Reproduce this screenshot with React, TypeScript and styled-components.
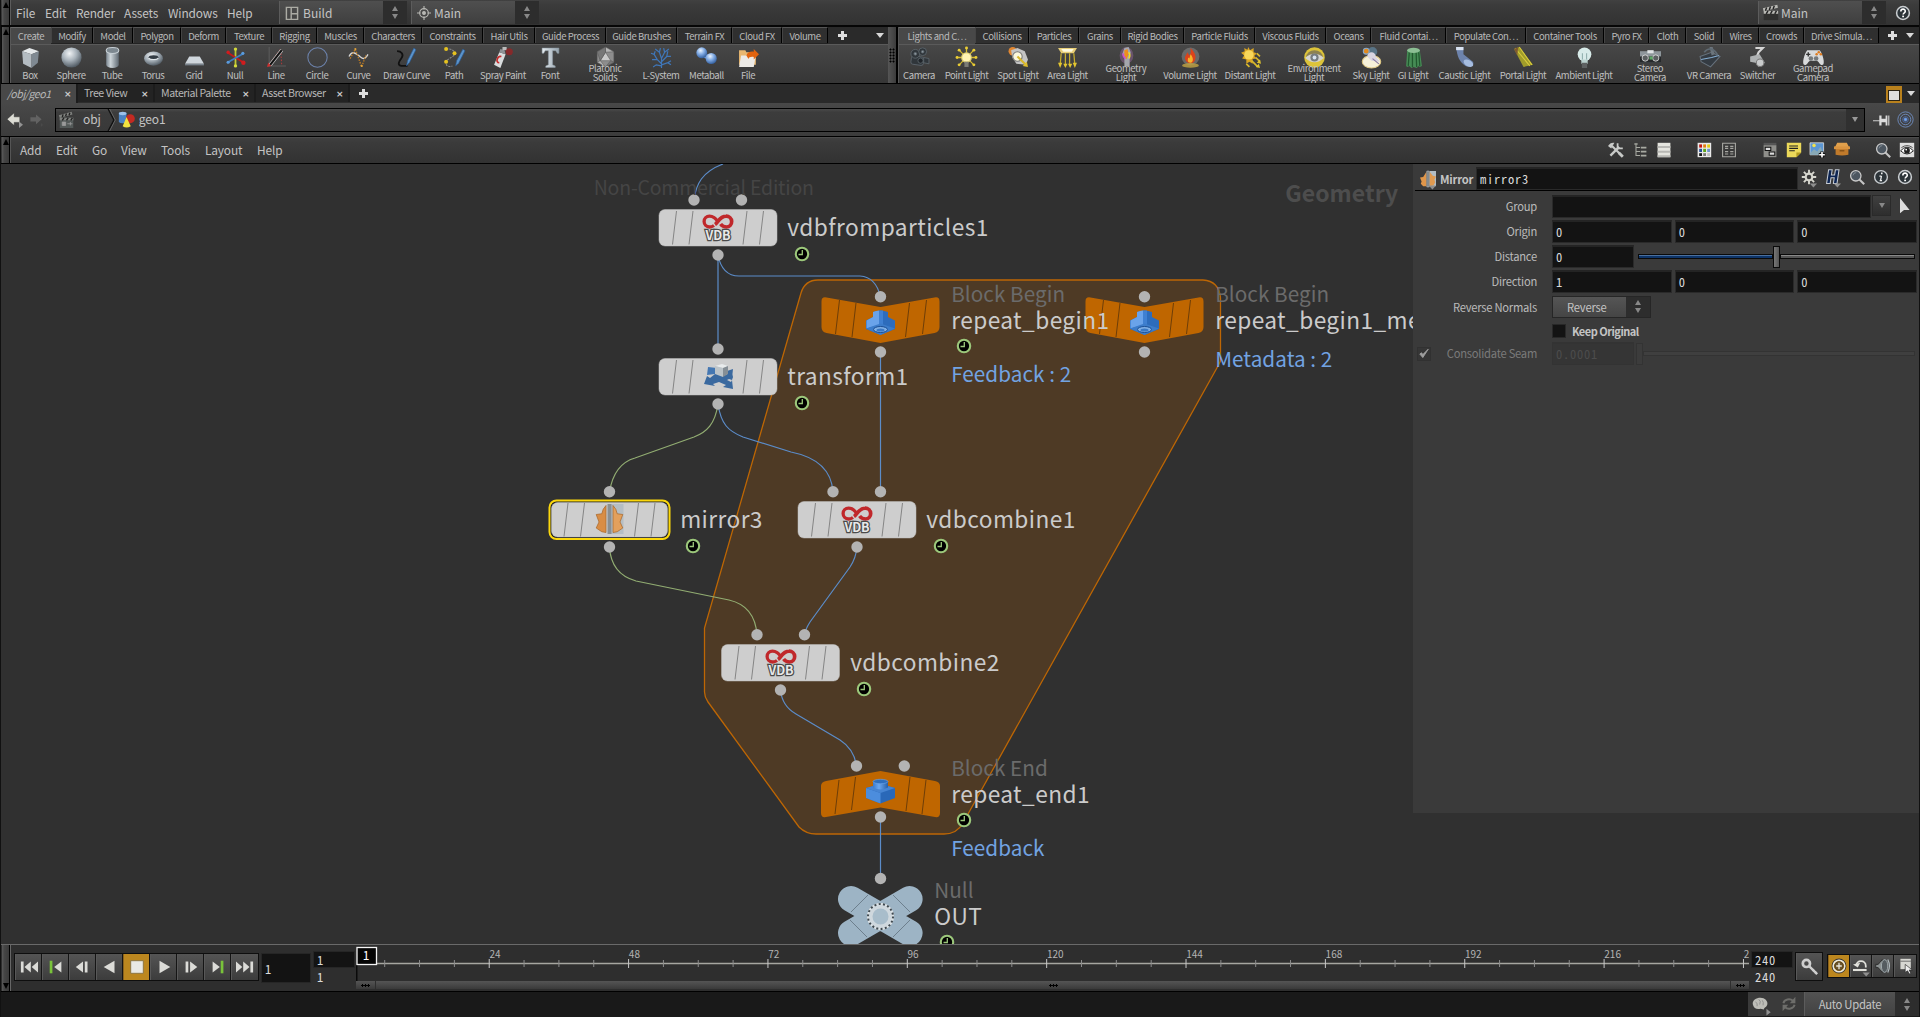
import React from "react";
import styled, { createGlobalStyle, css } from "styled-components";

const SANS = `"Noto Sans CJK SC", "Open Sans", sans-serif`;
const MONO = `"Noto Sans Mono CJK SC", "DejaVu Sans Mono", monospace`;

const Global = createGlobalStyle`
  * { box-sizing: border-box; }
  body { margin: 0; background: #191919; overflow: hidden; }
`;

const Frame = styled.div`
  width: 1920px;
  height: 1017px;
  display: flex;
  flex-direction: column;
  overflow: hidden;
  background: #303030;
  border-left: 1px solid #111;
  border-right: 1px solid #111;
  font-family: ${SANS};
  font-size: 12px;
  line-height: 16px;
  color: #c4c4c4;
  white-space: nowrap;
`;

const barFill = css`
  background: linear-gradient(#414141, #3b3b3b 20%, #323232);
`;

/* ---------- icons ---------- */

const steel = "url(#steel)";
const menuMark = <path d="M11 18h9l-4.500 5z" fill="#8f8f8f" />;
const icons: Record<string, React.ReactNode> = {
  box: (<g><path d="M2 4 9 1l9 3-7 3z" fill="#e4e8ea" /><path d="m2 4 9 3v13l-8-4z" fill="#b4bcc2" /><path d="m18 4-7 3v13l6-5z" fill="#7f8992" /></g>),
  sphere: <circle cx="10" cy="10" r="9.6" fill="url(#ball)" />,
  tube: (<g><path d="M4 3v14a6 3 0 0 0 12 0V3z" fill="url(#tube)" /><ellipse cx="10" cy="3.3" rx="6" ry="2.8" fill="#7d8890" stroke="#c8d0d6" /></g>),
  torus: (<g><ellipse cx="10" cy="11" rx="9" ry="6.800" fill="url(#ball)" /><ellipse cx="10" cy="9.8" rx="4.6" ry="2" fill="#333c44" /><path d="M5.5 10.400a4.6 2 0 0 0 9 0" fill="none" stroke="#dfe5e9" /></g>),
  grid: (<g><path d="M5 9h10l4 7H1z" fill="#cfd6dc" /><path d="M1 16h18v1.5H1z" fill="#78828b" /></g>),
  null: (<g strokeWidth="1.7"><path d="M10 2v16" stroke="#c2c832" /><path d="m2 5 16 10" stroke="#c5191b" /><path d="m2 15 16-9" stroke="#3f7fc2" /><circle cx="10" cy="2" r="1.6" fill="#d4da3c" /><circle cx="10" cy="18" r="1.6" fill="#d4da3c" /><circle cx="3" cy="5" r="1.6" fill="#d01c1e" /><circle cx="17.5" cy="15" r="2.1" fill="#d01c1e" /><circle cx="17" cy="6" r="1.5" fill="#5b9bdc" /><circle cx="3" cy="14.5" r="1.5" fill="#5b9bdc" /></g>),
  line: (<g fill="none"><path d="M3 0v18h16" stroke="#5c5c5c" /><path d="M2 18 14 2l1 16" stroke="#b03a3a" strokeDasharray="1.5 1.5" /><path d="M4 17 15 3" stroke="#c8c8c8" strokeWidth="3.200" /><path d="M4 17 15 3" stroke="#111" strokeWidth="2" /><path d="m1 19 4-1-3-3z" fill="#ce3030" /></g>),
  circle: <circle cx="10" cy="10" r="9.2" fill="none" stroke="#6c82ab" />,
  curve: (<g fill="none"><path d="M1 9C4 3 7 6 10 8s5 6 9-1" stroke="#d6d6d6" strokeWidth="1.3" /><path d="m2 11 5-9 6 17 4-11" stroke="#bf7b22" strokeWidth="1.3" strokeDasharray="1.4 1.2" /><circle cx="7" cy="2" r="1" fill="#e2a33a" /><circle cx="13" cy="18" r="1" fill="#e2a33a" /></g>),
  drawcurve: (<g fill="none"><path d="M1 4c4 0 7 3 4 7s-4 7 2 7h4" stroke="#111" strokeWidth="1.7" /><path d="m10 18 1-5 6-12 2 1.500-6 12z" fill="#5b93ca" stroke="#27568f" strokeWidth=".6" /></g>),
  path: (<g fill="none"><path d="M2 2c5-1 9 2 8 5s-8 4-8 8 3 4 6 3" stroke="#8b8b8b" strokeDasharray="2 1" /><path d="m11 18 1-5 6-11 2 1.500-6 12z" fill="#5b93ca" stroke="#27568f" strokeWidth=".6" /><g fill="#e6c21f"><circle cx="2" cy="2" r="1.900" /><circle cx="10" cy="6" r="1.900" /><circle cx="2" cy="14" r="1.900" /></g></g>),
  spray: (<g><path d="m6 5 6 2-5 13-6-3z" fill="#d9dcdd" /><path d="m7 2 4 1 1 4-6-2z" fill="#8e9194" /><path d="M9 0h4v3H9z" fill="#bbb" /><path d="M8 9c-4-1-6 6-2 6" fill="none" stroke="#c52b2b" strokeWidth="1.600" /><circle cx="15.500" cy="4.500" r="3.400" fill="#b3191b" opacity=".6" /></g>),
  font: <path d="M2 1h16v5h-1.500L15 3.500h-3V17l2.500 1v1.500h-9V18L8 17V3.500H5L3.500 6H2z" fill={steel} stroke="#8b97a1" strokeWidth=".5" />,
  platonic: (<g strokeWidth=".5" stroke="#555"><path d="m10 0 8 4.500v10L10 19l-8-4.500v-10z" fill="#8d8d8d" /><path d="m10 5 5 8H5z" fill="#cacaca" /><path d="m10 0 8 4.500-8 .500zM2 14.500 5 13l5 6z" fill="#b5b5b5" /><path d="m10 0-8 4.500L5 13l5-8zm8 14.500L15 13l-5 6z" fill="#777" /></g>),
  lsystem: (<g fill="none" stroke="#3f76b8" strokeWidth="1.150"><path d="M10 20V10M10 16l-4-4M10 14l5-5M10 11 8 5M10 11l3-6M6 12H1M6 12 3 7M15 9h4M15 9l1-5M8 5 4 2M8 5l1-4M13 5l-1-4M13 5l4-3M10 17l6-2 3 2M10 18l-5-1-3 2M3 7 0 6M3 7l1-3M16 15l3-2" /></g>),
  metaball: (<g><path d="m7 8 6 2" stroke="#6f9bd6" strokeWidth="4" /><circle cx="5.500" cy="5.500" r="5.200" fill="url(#blueball)" /><circle cx="14.500" cy="11" r="5.300" fill="url(#blueball)" /></g>),
  file: (<g><path d="M1 3h6l1 2h9v12H1z" fill="#e8b770" /><path d="M3 8h14l-2 11H1z" fill="#eceae6" /><path d="M8 8c1-3 4-4 7-3.500V2l5 5-5 5V9.500c-2-.5-5 0-5 2z" fill="#e0630f" /></g>),
  camera: (<g fill="#30363b" stroke="#5d666d" strokeWidth=".8"><rect x="2" y="9" width="12" height="8" rx="2" transform="rotate(8 8 13)" /><circle cx="6" cy="6.500" r="4.200" /><circle cx="13" cy="4.500" r="3.700" /><path d="m14 10 5 1v5l-5-1z" /><circle cx="6" cy="6.500" r="1.300" fill="#8a949c" /><circle cx="13" cy="4.500" r="1.200" fill="#8a949c" /><circle cx="11" cy="13" r="2.500" fill="#20252a" /></g>),
  pointlight: (<g stroke="#d9bd2c" strokeWidth="1.200"><path d="M10 1v4M1 10h4M15 10h4M3.500 3.500l3 3M16.500 3.500l-3 3M3.500 16.500l3-3M16.500 16.500l-3-3" /><circle cx="10" cy="10" r="4.500" fill="#fff3b4" stroke="#e8d878" /><path d="M8 14h4v5H8z" fill="#7c7c74" stroke="none" /><g fill="#eacd35" stroke="none"><circle cx="10" cy="1" r="1.400" /><circle cx="1" cy="10" r="1.400" /><circle cx="19" cy="10" r="1.400" /><circle cx="3" cy="3" r="1.400" /><circle cx="17" cy="3" r="1.400" /><circle cx="3" cy="17" r="1.400" /><circle cx="17" cy="17" r="1.400" /></g></g>),
  spotlight: (<g><circle cx="4.500" cy="4" r="4" fill="#e28731" /><path d="M3 3 9 1l7 3 3 8-2 5-9-1-4-6z" fill="#c4c4c4" /><circle cx="9" cy="9" r="4.500" fill="#fbf7dc" stroke="#777" /><path d="m9 9 8 8" stroke="#d8b72c" strokeWidth="2" /><path d="m19 19-5-1 4-4z" fill="#e0be2f" /></g>),
  arealight: (<g><path d="M1 1h18l-3 5H4z" fill="#e8cf78" /><path d="M4 2h12l-2 2.500H6z" fill="#fffbe0" /><path d="M4 6 3 17M8 6v12M12 6v12M16 6l1 11" stroke="#c5ac2c" strokeWidth="1.200" /><path d="M1 15h4l-2 5zM6 16h4l-2 4zM10.500 16h4l-2 4zM15 15h4l-2 5z" fill="#e2c530" /></g>),
  geolight: (<g><ellipse cx="10" cy="8" rx="6.500" ry="8" fill="#9b6aa0" opacity=".45" /><path d="m8 1 4-1 2 5-1 5v8H8v-7L6 7z" fill="#a4a7ad" /><path d="m8 3 3-1 1 5-2 5-2-4z" fill="#f08c1d" /><path d="M12 5c2 2 1 5 0 6" stroke="#f1e02a" strokeWidth="1.500" fill="none" /><path d="M7 6c-1 2 1 4 2 5" stroke="#cb4fca" strokeWidth="1.600" fill="none" /></g>),
  volume: (<g><circle cx="10" cy="9" r="8.500" fill="#777" opacity=".75" /><path d="M10 1c4 4 6 8 4 12-2 4-8 3-9-1-1-3 1-4 2-7l2 3c2-2 1-5 1-7z" fill="#dc431b" /><path d="M10 7c3 3 3 8 0 8s-3-3-2-5l1 1z" fill="#f7b32a" /><ellipse cx="10" cy="17.500" rx="8" ry="2.200" fill="#c3a543" opacity=".8" /></g>),
  distant: (<g><path d="m8 0 1.500 3L13 1v4l3 1-2.500 2.500L16 11l-4 .5V16l-3-2-3 2v-4l-4-1 2-3-3-2.500L4.500 4 4 1l3 1.500z" fill="#dba623" /><circle cx="8.500" cy="7.500" r="4.500" fill="#f8d75a" /><path d="m15 10 4 4M11 13l6 6M16 6l3 3M6 16l3 3" stroke="#d9b92d" strokeWidth="1.600" /><path d="m20 16-4-1 3-3zM19 20l-4-1 3-3z" fill="#e0c52e" /></g>),
  env: (<g><circle cx="10" cy="10" r="9.800" fill="#dcc33a" /><path d="M2 10a8 7 0 0 1 16 0 9 6 0 0 1-16 0z" fill="#8d8250" /><path d="M1 10.500q9-8 18 0-9 8-18 0z" fill="#d4d4d0" /><circle cx="10" cy="10" r="3.900" fill="#767c80" /><circle cx="10" cy="10" r="1.800" fill="#d7e3ee" /></g>),
  sky: (<g><circle cx="11" cy="4.500" r="4.500" fill="#597486" /><circle cx="5" cy="4" r="2.800" fill="#e28b1f" stroke="#88aacc" /><ellipse cx="10" cy="14" rx="8.800" ry="6" fill="#f6f1da" stroke="#dec784" /><path d="M6 9a4 4 0 0 1 8 0l4 5-8-1z" fill="#d9d5e0" /><path d="m11 11 6 5" stroke="#8777a0" /></g>),
  gi: (<g><path d="M4 3h12l2 15-2 1-1-1-2 2-3-1-2 1-2-2-2 1-1-1z" fill="#468c55" /><path d="M6 5 5 18M9 5v14M12.500 5l.500 14M15 5l1 13" stroke="#22592f" strokeWidth="1.200" /><ellipse cx="10" cy="3.200" rx="6" ry="2.500" fill="#8cbf94" /></g>),
  caustic: (<g><path d="M2 0h7v7l9 7c2 3-3 6-7 4C5 14 3 9 2 0z" fill="#6d83ac" /><path d="M2 0h7v3H2z" fill="#d9e3f2" /><ellipse cx="14" cy="15.500" rx="5" ry="3" fill="#a6bde0" transform="rotate(30 14 15)" /></g>),
  portal: (<g><path d="m1 2 5-2 13 17-9 2z" fill="#a09c2a" /><path d="m2 1 14 17M6 0l12 17" stroke="#d9cc3c" /><path d="m1 2 4-2-1 8z" fill="#7f5a2f" /></g>),
  ambient: (<g><circle cx="10" cy="7" r="6.500" fill="#d8ebe9" /><path d="M7 12h6v4H7z" fill="#bcd2d0" /><path d="M7.500 15h5v5h-5z" fill="#5e6162" /><path d="M8 6v6M12 6v6" stroke="#8faeac" /></g>),
  stereo: (<g><path d="M0 4h20v11H0z" fill="#8e969b" /><path d="M0 9h20v6H0z" fill="#26292b" /><circle cx="5" cy="10.500" r="3" fill="#5b5f61" stroke="#ddd" strokeWidth=".8" /><circle cx="15" cy="10.500" r="3" fill="#5b5f61" stroke="#ddd" strokeWidth=".8" /><path d="M7 3h6v3H7z" fill="#dfe3e5" /><path d="M9 9h3v3H9z" fill="#5ba765" /></g>),
  vr: (<g><path d="M1 9 12 5l8 4-9 10-9-5z" fill="#343b42" stroke="#66717c" /><path d="m2 12 10-2 7-2" stroke="#86aed2" fill="none" /><path d="M10 0h3l2 7-3 1z" fill="#6c757d" /><path d="M5 5c3-4 9-5 13 3" fill="none" stroke="#5f6a73" strokeWidth="1.500" /></g>),
  switcher: (<g><path d="M8 1h7l-4 4-2 5" fill="none" stroke="#d6d6d6" strokeWidth="2" /><path d="m3 9 9-2 5 8-6 4-3-4-5-1z" fill="#aeb1b2" /><circle cx="12.500" cy="15" r="3.600" fill="#c9cbcc" stroke="#777" /></g>),
  gamepad: (<g><path d="M4 3h12c3 4 5 12 3 14-3 1-4-4-6-4H7c-2 0-3 5-6 4-2-2 0-10 3-14z" fill="#d8dadb" /><circle cx="7.500" cy="11" r="2.200" fill="#767a7c" /><circle cx="12.500" cy="11" r="2.200" fill="#767a7c" /><path d="M3 7h4M5 5v4" stroke="#333" strokeWidth="1.300" /><circle cx="15" cy="5" r="1.200" fill="#df7c1f" /><circle cx="17" cy="7" r="1.200" fill="#df7c1f" /><circle cx="13" cy="7" r="1.200" fill="#df7c1f" /></g>),
  desktop: (<g fill="none" stroke="#ababa4" strokeWidth="1.800"><path d="M3 3h14v15H3zM9 3v15M9 11h8" /></g>),
  target: (<g fill="none" stroke="#b8b8b4" strokeWidth="1.600"><circle cx="10" cy="10" r="6.200" /><circle cx="10" cy="10" r="2" fill="#b8b8b4" /><path d="M10 0v5M10 15v5M0 10h5M15 10h5" /></g>),
  clap: (<g><path d="M2 9h17v10H2z" fill="#30302f" /><path d="M2 8h17v3.500H2z" fill="#b8b8b4" /><path d="m1 5 17-4 .8 3.500L2 8.500z" fill="#b8b8b4" /><path d="m4 8 1.500-4M8.500 7 10 3M13 6l1.500-4M5 11.500 7 8M10 11.500 12 8M15 11.500 17 8" stroke="#222" strokeWidth="1.700" /></g>),
  help: (<g><circle cx="10" cy="10" r="8" fill="#2c3439" stroke="#c9cdd0" strokeWidth="1.900" /><path d="M7.300 8q0-2.800 2.800-2.800T12.800 8c0 1.800-2.600 1.800-2.600 4" fill="none" stroke="#fff" strokeWidth="2" /><path d="M9 13.300h2.300v2H9z" fill="#fff" /></g>),
  info: (<g><circle cx="10" cy="10" r="8" fill="#2c3439" stroke="#c9cdd0" strokeWidth="1.700" /><path d="M10.600 8.500 9.400 14.500M8 9h2.500M8.300 14.500h3" fill="none" stroke="#eee" strokeWidth="1.600" /><path d="M10 4.500h2v2h-2z" fill="#eee" /></g>),
  search: (<g><path d="m13 13 6 6" stroke="#c4c4c4" strokeWidth="2.600" /><circle cx="8.500" cy="8.500" r="6.500" fill="#4c5660" stroke="#cbcbcb" strokeWidth="1.600" /><path d="M5 8a4 4 0 0 1 4-3.500" stroke="#8d98a0" fill="none" /></g>),
  back: (<g><path d="m0 9 9-8v5h7v7H9v4z" fill="#dcdcd4" stroke="#2a2a2a" strokeWidth=".6" /><path d="m15 12 5 4-5 4z" fill="#929292" /></g>),
  forward: (<g fill="#626262"><path d="m18 9-8-7v4H2v6h8v4z" /><path d="m17 14 3 3-3 3z" fill="#4a4a4a" /></g>),
  geo: (<g><path d="M1 2v11a5 2.500 0 0 0 9 0V2z" fill="#4b83c4" /><ellipse cx="5.500" cy="3" rx="4.500" ry="2" fill="#9cc0ea" /><circle cx="14.500" cy="9" r="5.300" fill="#c32a22" /><path d="m10 7 5 11q-5 3-9.500 0z" fill="#f2e23f" /></g>),
  obj: (<g><path d="M2 8h16v12H2z" fill="#535958" /><path d="m1 5 15-4 1 3L2 8zM2 8h16v3H2z" fill="#80827f" /><path d="m5 7 1-3M9 6l1-3M13 5l1-3M5 11l2-3M10 11l2-3M15 11l2-3" stroke="#222" strokeWidth="1.600" /><path d="M5 13h4v4H5zM11 15h6M14.500 13v4" stroke="#9a9a9a" fill="#9a9a9a" /></g>),
  pin: (<g><path d="M0 10h8v1.500H0z" fill="#aaa" /><path d="M7 5h2.500v3.500H14V5h2v11h-2v-3.500H9.500V16H7z" fill="#dcdcdc" /><path d="M17.500 5v11" stroke="#bbb" strokeWidth="1.500" /></g>),
  radar: (<g fill="none" stroke="#7191c8"><circle cx="10" cy="10" r="9" /><circle cx="10" cy="10" r="6.200" /><circle cx="10" cy="10" r="3.400" stroke="#4b70b5" /><circle cx="10" cy="10" r="1.700" fill="#6aa4ff" /></g>),
  wrench: (<g fill="none" stroke="#c8cac8"><path d="M3 17 14 6" strokeWidth="3" /><path d="M12 1.500v6.500h6.500" strokeWidth="2.200" /><path d="m5 5 12 12" strokeWidth="2.600" /><path d="M0 5q3-5 8-4L4 8z" fill="#c8cac8" stroke="none" /><path d="m13.500 13.500 5 5" strokeWidth="3.600" /></g>),
  tree: (<g fill="none" stroke="#a8aaa2" strokeWidth="1.300"><path d="M5 3v14h5M5 7h5M5 12h5" /><g strokeWidth="2"><path d="M3 2.500h4M11 7h7M11 12h7M11 17h7" /></g></g>),
  list: (<g><path d="M2 1h16v18H2z" fill="#e5e5df" /><path d="M2 5h16v2.500H2zM2 11h16v2.500H2zM2 16.500h16V19H2z" fill="#b8b8b4" /></g>),
  palette: (<g><path d="M2 1h17v18H2z" fill="#e9e9e9" /><path d="M4 3h3.500v4H4z" fill="#c3170f" /><path d="M9 3h3.500v4H9z" fill="#e47d10" /><path d="M14 3h3.500v4H14z" fill="#e2cd12" /><path d="M4 8.500h3.500v4H4z" fill="#27509a" /><path d="M9 8.500h3.500v4H9z" fill="#5ba618" /><path d="M14 8.500h3.500v4H14z" fill="#6e93cc" /><path d="M4 14h3.500v3.500H4z" fill="#111" /><path d="M9 14h3.500v3.500H9z" fill="#777" /><path d="M14 14h3.500v3.500H14z" fill="#bbb" /></g>),
  nodes: (<g fill="none" stroke="#a7a7a2" strokeWidth="1.400"><path d="M2 1.500h16v17H2zM5 5.500h4M11.500 5.500h4M5 8h4M11.500 8h4M5 12h4M11.500 12h4M5 15h4M11.500 15h4" /></g>),
  netbox: (<g><path d="M2 1h16v3H2z" fill="#555" /><path d="M2 4h16v15H2z" fill="#8e8e8a" /><path d="M4 6.500h7v4H4zM9 12.500h7v4H9z" fill="#ddd" stroke="#111" strokeWidth="1.300" /></g>),
  note: (<g><path d="M1 1h18v12l-6 6H1z" fill="#ecd95a" /><path d="M19 13h-6v6z" fill="#b39b20" /><path d="M4 5h11M4 8h11M4 11h7" stroke="#222" strokeWidth="1.400" /></g>),
  image: (<g><path d="M0 1h17v15H0z" fill="#5c96d2" stroke="#ddd" /><path d="m0 14 5-5 4 3 4-6 4 8v2H0z" fill="#88a9b7" /><circle cx="5" cy="4.500" r="2.200" fill="#f3e24c" /><path d="M15 12v8M11 16h8" stroke="#111" strokeWidth="4.200" /><path d="M15 12.500v7M11.500 16h7" stroke="#fff" strokeWidth="2" /></g>),
  crate: (<g><path d="M4 1h12l3 6H1z" fill="#e0a04c" /><path d="M2 8h16v8q-8 2-16 0z" fill="#c07a2b" /><path d="M0 5.500h20v3.500H0z" fill="#da9440" /><path d="M7 11h6" stroke="#7b4b13" strokeWidth="1.500" /></g>),
  eye: (<g><path d="M1 1h18v18H1z" fill="#dedede" /><path d="M2 11q8-9 16 0-8 8-16 0z" fill="#fff" stroke="#222" strokeWidth="1.200" /><circle cx="10" cy="10.800" r="3.600" fill="#222" /><circle cx="9" cy="9.500" r="1.100" fill="#fff" /><path d="M3 7q7-5 14 0" stroke="#333" fill="none" /></g>),
  mirror: (<g><path d="M12 0h8v19h-8z" fill="#b2bcc3" /><path d="M8 1v18l-4 0-3-3 1-3-2-5 4-.500z" fill="#e0964a" /><path d="M12 1v18l5-1 2-4-1-3 2-4-4-1z" fill="#e09a50" /><path d="M8.500 0h3v20h-3z" fill="#777f84" stroke="#ccc" strokeWidth=".6" />{menuMark}</g>),
  gear: (<g><path d="M10 1v18M1 10h18M3.600 3.600l12.800 12.800M16.400 3.600 3.600 16.400" stroke="#d6d6ce" strokeWidth="2.400" /><circle cx="10" cy="10" r="5.500" fill="#d6d6ce" /><circle cx="10" cy="10" r="2.800" fill="#3a3a3a" />{menuMark}</g>),
  aitch: (<g><path d="M4.500 1h4.500L8 7.500h4l1-6.500h4.500L15 18h-4.500l1-7h-4l-1 7H2z" fill="#0c2452" stroke="#c6ccd4" strokeWidth="1.300" />{menuMark}</g>),
  pointer: <path d="M5 0v19l5-4h7z" fill="#dedede" />,
  key: (<g><circle cx="6" cy="6" r="4" fill="none" stroke="#cfcfcf" strokeWidth="3" /><path d="m9 9 9 9M13 15l2-2M15.500 17.500l2-2" stroke="#cfcfcf" strokeWidth="2.600" /></g>),
  clock: (<g fill="none" stroke="#e7e7e0"><circle cx="10" cy="10" r="8.600" strokeWidth="1.400" stroke="#333" /><circle cx="10" cy="10" r="7.300" strokeWidth="1.800" /><circle cx="10" cy="10" r="5.300" stroke="#3d3424" fill="#70572a" /><path d="M10 6v8M6.500 10h7" strokeWidth="1.600" /></g>),
  loop: (<g fill="none"><path d="M0 15h17" stroke="#e1e1db" strokeWidth="2.600" /><path d="M4 10C4 2 16 2 16 10v2" stroke="#e1e1db" strokeWidth="2.200" /><path d="m0 8 9-2-3 6z" fill="#e1e1db" /><path d="M12 18h9l-4.500 5z" fill="#8f8f8f" /></g>),
  speaker: (<g fill="none" stroke="#b3bec2"><path d="M1 8h3l5-6v16l-5-6H1z" fill="#8c9191" stroke="#222" /><ellipse cx="12" cy="10" rx="4" ry="8" fill="#555c60" /><path d="M16 2q4 8 0 16" strokeWidth="1.500" /></g>),
  window: (<g><path d="M3 1h13v13H3z" fill="#d7d7d2" /><path d="M3 4h13" stroke="#555" /><path d="M9 8v10l3-2 2 4 2-1-2-4h4z" fill="#eee" stroke="#222" strokeWidth=".8" /></g>),
  brain: (<g><path d="M1 10c-1-5 4-8 9-8s9 4 8 8-4 3-4 6l-4-1c-4 1-8 0-9-5z" fill="#bdbdb7" /><path d="M4 7q3 1 2 5M8 4q3 2 1 6M12 5q2 2 1 6" fill="none" stroke="#888" /><path d="m17 15 5 4-5 4z" fill="#909090" /></g>),
  refresh: (<g fill="none" stroke="#6d6d6a" strokeWidth="2.400"><path d="M3 9a7 6 0 0 1 12-3M17 11a7 6 0 0 1-12 3" /><path d="M18 1v8h-7zM2 19v-8h7z" fill="#6d6d6a" stroke="none" /></g>),
  check: <path d="m3 10 5 6 9-14-9 9-2-3z" fill="#a0a0a0" stroke="#a0a0a0" strokeWidth="1.500" />,
};

const Glyph = styled.svg<{ $s: number }>`
  width: ${(p) => p.$s}px;
  height: ${(p) => p.$s}px;
  flex: none;
  overflow: visible;
  display: block;
`;
const Icon = ({ n, s = 16 }: { n: string; s?: number }) => (
  <Glyph $s={s} viewBox="0 0 20 20">{icons[n]}</Glyph>
);

const Tri = styled.i<{ $up?: boolean; $c?: string; $w?: number; $h?: number }>`
  width: 0;
  height: 0;
  border: ${(p) => p.$w ?? 3}px solid transparent;
  border-${(p) => (p.$up ? "bottom" : "top")}: ${(p) => p.$h ?? 5}px solid ${(p) => p.$c ?? "#888"};
  border-${(p) => (p.$up ? "top" : "bottom")}: 0;
`;

/* ---------- shared bits ---------- */

const Grip = styled.div<{ $low?: boolean }>`
  width: 8px;
  margin-left: 1px;
  flex: none;
  display: flex;
  justify-content: center;
  align-items: ${(p) => (p.$low ? "flex-end" : "flex-start")};
  padding: 2px 0;
  background: linear-gradient(90deg, #5a5a5a, #464646 30%, #3a3a3a);
  border-right: 1px solid #000;
`;

const Stepper = styled.div`
  width: 24px;
  align-self: stretch;
  display: flex;
  flex-direction: column;
  align-items: center;
  justify-content: center;
  gap: 3px;
  background: #2d2d2d;
`;

const Combo = styled.div<{ $ml?: number }>`
  width: 128px;
  height: 23px;
  margin-left: ${(p) => p.$ml ?? 0}px;
  display: flex;
  align-items: center;
  background: linear-gradient(#4f4f4f, #3f3f3f);
  border-left: 1px solid #5c5c5c;
`;
const ComboText = styled.span<{ $p?: number }>`
  flex: 1;
  padding-left: ${(p) => p.$p ?? 4}px;
`;
const Steps = () => (<Stepper><Tri $up /><Tri /></Stepper>);

const Spacer = styled.div<{ $w?: number }>`
  ${(p) => (p.$w ? `width: ${p.$w}px; flex: none;` : "flex: 1;")}
`;

/* ---------- main menu ---------- */

const MenuBar = styled.div`
  height: 27px;
  flex: none;
  display: flex;
  ${barFill}
  border-bottom: 2px solid #060606;
`;
const MenuBody = styled.div`
  flex: 1;
  display: flex;
  align-items: center;
  padding: 0 8px 0 5px;
  border-left: 1px solid #5c5c5c;
`;
const MenuItem = styled.span<{ $w: number }>`
  width: ${(p) => p.$w}px;
  font-size: 11.900px;
  letter-spacing: -0.150px;
`;

/* ---------- shelves ---------- */

const Shelves = styled.div`
  height: 57px;
  flex: none;
  display: flex;
  background: #0a0a0a;
  border-bottom: 1px solid #000;
`;
const Shelf = styled.div<{ $w?: number }>`
  ${(p) => (p.$w ? `width: ${p.$w}px; flex: none;` : "flex: 1;")}
  display: flex;
  flex-direction: column;
  overflow: hidden;
  border-left: 1px solid #585858;
`;
const ShelfTabs = styled.div`
  height: 17px;
  display: flex;
  background: #232323;
`;
const ShelfTab = styled.div<{ $w: number; $on?: boolean }>`
  width: ${(p) => p.$w}px;
  flex: none;
  height: ${(p) => (p.$on ? 17 : 16)}px;
  overflow: hidden;
  text-align: center;
  font-size: 9.500px;
  line-height: 17px;
  letter-spacing: -0.400px;
  color: #bababa;
  border-top: 1px solid ${(p) => (p.$on ? "#6a6a6a" : "#555")};
  border-right: ${(p) => (p.$on ? 0 : 1)}px solid #000;
  border-left: ${(p) => (p.$on ? 0 : 1)}px solid #444;
  background: ${(p) => (p.$on ? "#484848" : "#2f2f2f")};
`;
const TabEnd = styled.div<{ $gap: number; $pad: number }>`
  flex: 1;
  display: flex;
  align-items: center;
  gap: ${(p) => p.$gap}px;
  padding-left: ${(p) => p.$pad}px;
  background: #2a2a2a;
`;
const Plus = styled.i`
  width: 9px;
  height: 9px;
  background: linear-gradient(#ddd, #ddd) center / 9px 3px no-repeat,
    linear-gradient(#ddd, #ddd) center / 3px 9px no-repeat;
`;
const Tools = styled.div<{ $ml: number }>`
  flex: 1;
  display: flex;
  border-top: 1px solid #5a5a5a;
  background: linear-gradient(#474747, #363636);
  & > :first-child { margin-left: ${(p) => p.$ml}px; }
`;
const Tool = styled.div<{ $w: number }>`
  width: ${(p) => p.$w}px;
  flex: none;
  display: flex;
  flex-direction: column;
  align-items: center;
  padding-top: 2px;
`;
const ToolLabel = styled.div<{ $two?: boolean }>`
  position: relative;
  width: max-content;
  text-align: center;
  white-space: ${(p) => (p.$two ? "pre" : "nowrap")};
  font-size: 9.500px;
  letter-spacing: -0.400px;
  line-height: ${(p) => (p.$two ? 9 : 14)}px;
  margin-top: ${(p) => (p.$two ? -4 : 0)}px;
  color: #c0c0c0;
`;
const Splitter = styled.div`
  width: 10px;
  flex: none;
  display: flex;
  justify-content: center;
  align-items: center;
  background: linear-gradient(90deg, #555, #3c3c3c);
  border-right: 2px solid #000;
`;
const Dots = styled.i`
  width: 6px;
  height: 15px;
  background: radial-gradient(circle, #000 0.9px, transparent 1.100px) 0 0 / 3px 3px;
`;

type Pair = [string, number];
const leftTabs: Pair[] = [["Create", 40], ["Modify", 42], ["Model", 40], ["Polygon", 48], ["Deform", 45], ["Texture", 46], ["Rigging", 45], ["Muscles", 47], ["Characters", 58], ["Constraints", 61], ["Hair Utils", 52], ["Guide Process", 71], ["Guide Brushes", 71], ["Terrain FX", 55], ["Cloud FX", 50], ["Volume", 46]];
const rightTabs: Pair[] = [["Lights and C…", 76], ["Collisions", 54], ["Particles", 50], ["Grains", 42], ["Rigid Bodies", 63], ["Particle Fluids", 71], ["Viscous Fluids", 71], ["Oceans", 45], ["Fluid Contai…", 75], ["Populate Con…", 80], ["Container Tools", 78], ["Pyro FX", 45], ["Cloth", 37], ["Solid", 36], ["Wires", 37], ["Crowds", 45], ["Drive Simula…", 75]];
type ToolDef = [string, string, number];
const leftTools: ToolDef[] = [["Box", "box", 41], ["Sphere", "sphere", 41], ["Tube", "tube", 41], ["Torus", "torus", 41], ["Grid", "grid", 41], ["Null", "null", 41], ["Line", "line", 41], ["Circle", "circle", 41], ["Curve", "curve", 42], ["Draw Curve", "drawcurve", 54], ["Path", "path", 41], ["Spray Paint", "spray", 57], ["Font", "font", 37], ["Platonic\nSolids", "platonic", 73], ["L-System", "lsystem", 39], ["Metaball", "metaball", 52], ["File", "file", 31]];
const rightTools: ToolDef[] = [["Camera", "camera", 40], ["Point Light", "pointlight", 55], ["Spot Light", "spotlight", 48], ["Area Light", "arealight", 51], ["Geometry\nLight", "geolight", 66], ["Volume Light", "volume", 62], ["Distant Light", "distant", 58], ["Environment\nLight", "env", 70], ["Sky Light", "sky", 44], ["GI Light", "gi", 40], ["Caustic Light", "caustic", 63], ["Portal Light", "portal", 54], ["Ambient Light", "ambient", 68], ["Stereo\nCamera", "stereo", 64], ["VR Camera", "vr", 54], ["Switcher", "switcher", 43], ["Gamepad\nCamera", "gamepad", 68]];

const ShelfSet = ({ w, tabs, tools, ml, gap, pad }: { w?: number; tabs: Pair[]; tools: ToolDef[]; ml: number; gap: number; pad: number }) => (
  <Shelf $w={w}>
    <ShelfTabs>
      {tabs.map(([t, tw], i) => (<ShelfTab key={t} $w={tw} $on={i === 0}>{t}</ShelfTab>))}
      <TabEnd $gap={gap} $pad={pad}><Plus /><Tri $c="#d8d8d8" $w={4} /></TabEnd>
    </ShelfTabs>
    <Tools $ml={ml}>
      {tools.map(([t, ic, tw]) => (
        <Tool key={t} $w={tw}><Icon n={ic} s={21} /><ToolLabel $two={t.includes("\n")}>{t}</ToolLabel></Tool>
      ))}
    </Tools>
  </Shelf>
);

/* ---------- pane tabs, path, network menu ---------- */

const PaneTabs = styled.div`
  height: 19px;
  flex: none;
  display: flex;
  align-items: stretch;
  background: #2d2d2d;
`;
const PaneTab = styled.div<{ $w: number; $on?: boolean; $p: number }>`
  width: ${(p) => p.$w}px;
  height: ${(p) => (p.$on ? 19 : 18)}px;
  display: flex;
  align-items: center;
  justify-content: space-between;
  padding: 0 5px 0 ${(p) => p.$p}px;
  font-size: 10.600px;
  line-height: 16px;
  letter-spacing: -0.450px;
  color: #b6b6b6;
  font-style: ${(p) => (p.$on ? "italic" : "normal")};
  background: ${(p) => (p.$on ? "#484848" : "#232323")};
  border-right: 2px solid #1c1c1c;
`;
const Close = styled.span`
  font: bold 9px/16px "DejaVu Sans", sans-serif;
  padding-top: 1px;
  color: #ccc;
`;
const PaneMax = styled.div`
  width: 16px;
  height: 17px;
  margin: 1px 5px 0 0;
  border: 2px solid #b9811d;
  border-top-width: 4px;
  background: #2b2415;
  padding: 1px;
  &::after { content: ""; display: block; height: 9px; background: #dededc; }
`;
const PathBar = styled.div`
  height: 34px;
  flex: none;
  display: flex;
  align-items: center;
  gap: 6px;
  padding: 0 5px 0 6px;
  background: linear-gradient(#484848, #3c3c3c);
  border-bottom: 1px solid #000;
`;
const PathBox = styled.div`
  flex: 1;
  height: 24px;
  margin: 0 2px 0 6px;
  display: flex;
  align-items: center;
  padding-left: 2px;
  font-size: 12px;
  letter-spacing: -0.100px;
  border: 1px solid #000;
  background: linear-gradient(#4a4a4a, #3c3c3c 15%, #393939);
`;
const Crumb = styled.span<{ $l: number }>`
  margin: -1px 6px 0 ${(p) => p.$l}px;
`;
const DropEnd = styled.div`
  width: 18px;
  align-self: stretch;
  display: flex;
  align-items: center;
  justify-content: center;
  background: #303030;
`;
const NetMenu = styled.div`
  height: 27px;
  flex: none;
  display: flex;
  ${barFill}
  border-bottom: 1px solid #000;
`;
const NetBody = styled.div`
  flex: 1;
  display: flex;
  align-items: center;
  padding: 0 4px 1px 9px;
  border-left: 1px solid #555;
  border-top: 1px solid #4c4c4c;
`;

/* ---------- network canvas ---------- */

const Workspace = styled.div`
  flex: 1;
  position: relative;
  display: flex;
  justify-content: flex-end;
  overflow: hidden;
`;
const Graph = styled.svg`
  position: absolute;
  left: -1px;
  top: 0;
  width: 1920px;
  height: 780px;
`;
const Label = styled.div<{ $x: number; $y: number; $c?: string; $s?: number; $ls?: number; $b?: boolean }>`
  position: absolute;
  left: ${(p) => p.$x - 1.800}px;
  top: ${(p) => p.$y - 185}px;
  font-size: ${(p) => p.$s ?? 22.700}px;
  line-height: 24px;
  letter-spacing: ${(p) => p.$ls ?? 0.420}px;
  font-weight: ${(p) => (p.$b ? 700 : 400)};
  color: ${(p) => p.$c ?? "#cbcbcb"};
`;

const BLUE = "#5b8cc9";
const GREEN = "#92ad72";

const Dot = ({ x, y }: { x: number; y: number }) => <circle cx={x} cy={y} r="5.700" fill="#b3b3b3" />;
const Clock = ({ x, y }: { x: number; y: number }) => (
  <g><circle cx={x} cy={y} r="6.200" fill="#000" stroke="#9cc87b" strokeWidth="2.100" /><path d={`M${x + 0.3} ${y - 4}v4.500h-3.800`} fill="none" stroke="#9cc87b" strokeWidth="1.300" /></g>
);
const Vdb = ({ x, y }: { x: number; y: number }) => (
  <g transform={`translate(${x} ${y})`}>
    <path d="M-4-2.500C-5.500-1.400-7-1-8.500-1a5.300 5.300 0 0 1 0-10.800C-3.500-11.800-1.500-8.500 0-6" fill="none" stroke="#c0282b" strokeWidth="3.300" />
    <path d="M-3-3.500C-.500-5 2-11.800 8-11.800A5.300 5.300 0 0 1 8.500-1C5.500-1 3.800-2.400 2.600-4" fill="none" stroke="#c0282b" strokeWidth="3.700" />
    <text x="0" y="12" textAnchor="middle" fontFamily={SANS} fontWeight="700" fontSize="12.500" fill="#e8e8e8" stroke="#4a4a4a" strokeWidth="2.400" paintOrder="stroke">VDB</text>
  </g>
);
const Plate = ({ x, y, sel }: { x: number; y: number; sel?: boolean }) => (
  <g>
    {sel && <rect x={x - 1} y={y - 1} width="120" height="38.500" rx="7" fill="#1c1c1c" stroke="#fbd70c" strokeWidth="2" />}
    <rect x={x + (sel ? 1 : 0)} y={y + (sel ? 1 : 0)} width={sel ? 116 : 118} height={sel ? 34.500 : 36.500} rx="6" fill="#cecece" stroke="#bcbcbc" strokeWidth=".5" />
    <path d={`M${x + 17.500} ${y + 1.500}l-4 33.500M${x + 34} ${y + 1.500}l-4 33.500M${x + 88} ${y + 1.500}l-4 33.500M${x + 104.500} ${y + 1.500}l-4 33.500`} stroke="#858585" />
  </g>
);
const Brick = ({ x, y }: { x: number; y: number }) => (
  <g transform={`translate(${x} ${y})`}>
    <path d="m-14.500-3 14.500-4 14.500 4v10L0 12.500-14.500 7z" fill="#2a68b8" />
    <path d="M-14.500-3 0 2v10.500L-14.500 7z" fill="#4c8ddd" />
    <path d="m-14.500-3 14.500-4 14.500 4L0 2z" fill="#4684d2" />
    <path d="M-7.500-9.500v6q7.500 4 15 0v-6z" fill="url(#stub)" />
    <ellipse cy="-9.500" rx="7.500" ry="2.200" fill="#2f6fbe" stroke="#6ea6ea" strokeWidth=".6" />
  </g>
);
const BrickUnder = ({ x, y }: { x: number; y: number }) => (
  <g transform={`translate(${x} ${y})`}>
    <path d="M-7.500-10q7.500-3 15 0v5l7 3.500V7L0 13-14.500 7v-8.500l7-3.500z" fill="#2d6cbc" />
    <path d="M-7.500-10q3-1.500 6-1.500V3L-14 6.500v-8l6.500-3.500z" fill="#6aa3ea" />
    <path d="M-1.500-11.500h4V3h-4z" fill="#3f80d2" />
    <path d="M-14.500 6.500 0 1.500l14.500 5L0 13z" fill="#3c7cca" />
    <ellipse cy="7.500" rx="7" ry="3" fill="#7eaee4" stroke="#1c4f94" />
    <ellipse cy="8" rx="4" ry="1.600" fill="#3a78c4" />
  </g>
);
const Vee = ({ x }: { x: number }) => (
  <g>
    <path d={`M${x - 54} 297.500L${x} 307 ${x + 54} 297.500q5-1 5 4V327q0 5-5 6L${x} 343 ${x - 54} 333q-5-1-5-6V301.500q0-5 5-4z`} fill="#bf6600" />
    <path d={`M${x - 41} 300l-4 34M${x - 24.500} 303l-4 34M${x + 29} 303l-4 34M${x + 46} 300l-4 34`} stroke="#6e3e08" />
    <BrickUnder x={x} y={322} />
  </g>
);

const ports = [[694, 200], [741.5, 200], [718, 255], [718, 349], [718, 404], [880.5, 296.7], [880.5, 352], [1144.5, 296.7], [1144.5, 352], [609.5, 491.7], [609.5, 547], [833, 491.7], [880.5, 491.7], [857, 547], [757, 634.7], [804.5, 634.7], [780.5, 690], [856.5, 766], [904.3, 766], [880.5, 817], [880.5, 878.5]];
const clocks = [[802, 254], [802, 403], [964, 346], [693, 546], [941, 546], [864, 689], [964, 820], [947, 942]];

const NetworkGraph = () => (
  <Graph viewBox="0 164 1920 780">
    <defs>
      <radialGradient id="ball" cx=".4" cy=".3" r=".7"><stop offset="0" stopColor="#f0f3f5" /><stop offset=".5" stopColor="#a9b3bb" /><stop offset="1" stopColor="#525c65" /></radialGradient>
      <radialGradient id="blueball" cx=".4" cy=".3" r=".7"><stop offset="0" stopColor="#eaf4ff" /><stop offset=".5" stopColor="#7fa9e2" /><stop offset="1" stopColor="#34609f" /></radialGradient>
      <linearGradient id="steel"><stop offset="0" stopColor="#e6ecf0" /><stop offset="1" stopColor="#95a3ae" /></linearGradient>
      <linearGradient id="tube"><stop offset="0" stopColor="#7b8690" /><stop offset=".35" stopColor="#cdd5da" /><stop offset="1" stopColor="#606a73" /></linearGradient>
      <linearGradient id="stub"><stop offset="0" stopColor="#3a7bcf" /><stop offset=".4" stopColor="#6aa6ef" /><stop offset="1" stopColor="#265fa8" /></linearGradient>
    </defs>
    <path d="M801 293Q805 280 818 280H1203Q1219 281 1220.500 298V361L1218 366 963 823Q957 834 944 834H816Q806 834 799 827L708 702Q704.500 697 704.500 692V628z" fill="#4e3a25" stroke="#bd6604" strokeWidth="1.300" />
    <g fill="none" stroke={BLUE} strokeWidth="1.200">
      <path d="M723 164C702 172 696 184 694 200" />
      <path d="M718 255V349M718 255Q722 276 739 276H860Q876 277 880.500 297" />
      <path d="M880.500 352V492" />
      <path d="M718 404C721 424 728 431 743 437L791 452Q831 460 833 492" />
      <path d="M857 547Q856 558 850 567L810 622Q805 630 804.500 635" />
      <path d="M780.500 690Q782 706 796 714L840 740Q854 749 856.500 766" />
      <path d="M880.500 817V878" />
    </g>
    <g fill="none" stroke={GREEN} strokeWidth="1.200">
      <path d="M718 404C715 424 707 432 694 437L635 458Q614 464 609.500 492" />
      <path d="M609.500 547Q611 574 636 581L729 600Q755 606 757 635" />
    </g>
    <Plate x={659} y={209.500} /><Vdb x={718} y={228} />
    <Plate x={659} y={358.500} />
    <g transform="translate(718 376)">
      <path d="m-14 8 3-8 3 2 5-4h10l5 2 2-2 1 3-1 3-3-1-2 1 4 2 1-2 1 9-10-2 3-2-7-3-6 2 2 2z" fill="#3a699f" />
      <path d="m-10-9 9 1-2 6-8 1z" fill="#4477b2" />
      <path d="m9-5 6-2-1 9-5-1z" fill="#3a699f" />
      <path d="m-3-10 7-2 6 2-5 2z" fill="#e8ebec" /><path d="m-3-10 8 2v9l-8-3z" fill="#bcc4c9" /><path d="m5-8 5-2v8l-5 3z" fill="#868f96" />
    </g>
    <Plate x={550.500} y={501.500} sel />
    <g transform="translate(595.500 504) scale(1.400 1.500)">
      <path d="M11 0h9v20h-9z" fill="#b5bec4" />
      <path d="M7.500 1v18l-3-.500-4-2.500 2-4-2-5 4-.500 1-3z" fill="#d98d45" stroke="#a8672a" strokeWidth=".5" />
      <path d="M12.500 1v18l3-.500 4-2.500-2-4 2-5-4-.500-1-3z" fill="#e3a05c" stroke="#a8672a" strokeWidth=".5" />
      <path d="M8.600 0h2.800v20H8.600z" fill="#8a8f92" />
    </g>
    <Plate x={798} y={501.500} /><Vdb x={857} y={520} />
    <Plate x={721.500} y={644.500} /><Vdb x={781} y={663} />
    <Vee x={880.500} /><Vee x={1144.500} />
    <path d="M826 781 880.500 771 935 781q5 1 5 5V813q0 5-5 4L880.500 807.500 826 817q-5 1-5-4V786q0-4 5-5z" fill="#bf6600" />
    <path d="m839 780-4 34M855.500 777l-4 33M910 777l-4 34M926 780l-4 34" stroke="#6e3e08" />
    <Brick x={880.500} y={791} />
    <path d="m851 899 58.600 34M909.600 899 851 933" stroke="#9db4c5" strokeWidth="26" strokeLinecap="round" />
    <path d="m868 895-17 17M893 895l17 17M850 920l17 17M910 920l-17 17" stroke="#6d7f8d" />
    <circle cx="880.500" cy="916.500" r="10" fill="#a8bdcb" stroke="#cfd8de" strokeWidth="4" />
    <circle cx="880.500" cy="916.500" r="12.500" fill="none" stroke="#dde3e6" strokeWidth="2" />
    <circle cx="880.500" cy="916.500" r="12.500" fill="none" stroke="#3f4950" strokeWidth="2" strokeDasharray="2 2.360" />
    {ports.map(([x, y]) => (<Dot key={`${x}-${y}`} x={x} y={y} />))}
    {clocks.map(([x, y]) => (<Clock key={`${x}-${y}`} x={x} y={y} />))}
  </Graph>
);

/* ---------- parameter panel ---------- */

const Panel = styled.div`
  position: relative;
  width: 506px;
  height: 649px;
  background: #3a3a3a;
  padding: 3px 2px 0 2px;
  font-size: 11.200px;
`;
const PanelHead = styled.div`
  height: 24px;
  display: flex;
  align-items: center;
  padding-left: 5px;
  margin-bottom: 4px;
  border-bottom: 1px solid #000;
`;
const PanelTitle = styled.b`
  width: 40px;
  padding-left: 4px;
  letter-spacing: -0.200px;
`;
const Field = styled.div<{ $w?: number; $off?: boolean }>`
  ${(p) => (p.$w ? `width: ${p.$w}px; flex: none;` : "flex: 1;")}
  height: 23px;
  padding-left: 3px;
  border: 1px solid ${(p) => (p.$off ? "#333" : "#2a2a2a")};
  border-top: 2px solid ${(p) => (p.$off ? "#333" : "#242424")};
  background: ${(p) => (p.$off ? "#353535" : "#131313")};
  font: 12.500px/20px ${MONO};
  letter-spacing: 0.750px;
  color: ${(p) => (p.$off ? "#4c4c4c" : "#dadada")};
`;
const HeadIcons = styled.div`
  display: flex;
  gap: 8px;
  padding: 0 4px 4px 3px;
`;
const Row = styled.div<{ $h?: number }>`
  height: ${(p) => p.$h ?? 25}px;
  display: flex;
  align-items: flex-start;
`;
const RowLabel = styled.div<{ $off?: boolean; $lh?: number }>`
  width: 122px;
  margin-right: 15px;
  flex: none;
  display: flex;
  justify-content: space-between;
  line-height: ${(p) => p.$lh ?? 23}px;
  letter-spacing: -0.250px;
  color: ${(p) => (p.$off ? "#7b7b7b" : "#bababa")};
`;
const Fields = styled.div`
  flex: 1;
  display: flex;
  gap: 3px;
`;
const DropButton = styled.div`
  width: 19px;
  height: 21px;
  margin-left: 1px;
  display: flex;
  align-items: center;
  justify-content: center;
  background: linear-gradient(#404040, #2e2e2e);
  border: 1px solid #2a2a2a;
`;
const PointerSlot = styled.div`
  width: 23px;
  padding: 3px 0 0 5px;
`;
const Slider = styled.div<{ $off?: boolean }>`
  flex: 1;
  display: flex;
  align-items: center;
  height: 23px;
  padding: 0 2px 0 ${(p) => (p.$off ? 2 : 4)}px;
`;
const Track = styled.div<{ $w?: number; $fill?: boolean; $off?: boolean }>`
  ${(p) => (p.$w ? `width: ${p.$w}px;` : "flex: 1;")}
  height: 5px;
  border: 1px solid ${(p) => (p.$off ? "#333" : "#0a0a0a")};
  background: ${(p) => (p.$off ? "#3f3f3f" : p.$fill ? "linear-gradient(#4a6f9c 1px, #0d3469 1px)" : "linear-gradient(#888 1px, #555 1px)")};
`;
const Thumb = styled.div<{ $off?: boolean }>`
  width: 7px;
  height: 22px;
  border: 1px solid ${(p) => (p.$off ? "#333" : "#0a0a0a")};
  background: ${(p) => (p.$off ? "#3c3c3c" : "linear-gradient(90deg, #777, #555)")};
`;
const Select = styled.div`
  width: 99px;
  height: 22px;
  margin-top: 0.500px;
  display: flex;
  align-items: center;
  border: 1px solid #262626;
  background: linear-gradient(#555, #454545);
`;
const SelectText = styled.span`
  flex: 1;
  padding-left: 14px;
  letter-spacing: -0.200px;
`;
const Check = styled.div<{ $dim?: boolean }>`
  width: 14px;
  height: 14px;
  flex: none;
  display: flex;
  align-items: center;
  justify-content: center;
  border: 1px solid ${(p) => (p.$dim ? "#313131" : "#282828")};
  background: ${(p) => (p.$dim ? "#363636" : "#131313")};
`;
const CheckSlot = styled.div<{ $l?: number }>`
  display: flex;
  align-items: center;
  height: 23px;
  gap: 6px;
  padding-left: ${(p) => p.$l ?? 0}px;
  font-size: 11px;
  font-weight: 700;
  letter-spacing: -0.500px;
`;

const ParamPanel = () => (
  <Panel>
    <PanelHead>
      <Icon n="mirror" s={16} />
      <PanelTitle>Mirror</PanelTitle>
      <Field>mirror3</Field>
      <HeadIcons>{["gear", "aitch", "search", "info", "help"].map((n) => <Icon key={n} n={n} s={16} />)}</HeadIcons>
    </PanelHead>
    <Row><RowLabel><i />Group</RowLabel><Field $w={319} /><DropButton><Tri /></DropButton><PointerSlot><Icon n="pointer" s={16} /></PointerSlot></Row>
    <Row><RowLabel><i />Origin</RowLabel><Fields><Field>0</Field><Field>0</Field><Field>0</Field></Fields></Row>
    <Row><RowLabel><i />Distance</RowLabel><Field $w={82}>0</Field><Slider><Track $w={135} $fill /><Thumb /><Track /></Slider></Row>
    <Row><RowLabel><i />Direction</RowLabel><Fields><Field>1</Field><Field>0</Field><Field>0</Field></Fields></Row>
    <Row $h={24}><RowLabel $lh={25}><i />Reverse Normals</RowLabel><Select><SelectText>Reverse</SelectText><Steps /></Select></Row>
    <Row $h={23}><RowLabel /><CheckSlot><Check />Keep Original</CheckSlot></Row>
    <Row><RowLabel $off><CheckSlot $l={2}><Check $dim><Icon n="check" s={12} /></Check></CheckSlot>Consolidate Seam</RowLabel><Field $w={82} $off>0.0001</Field><Slider $off><Thumb $off /><Track $off /></Slider></Row>
  </Panel>
);

/* ---------- playbar ---------- */

const PlayBar = styled.div`
  height: 48px;
  flex: none;
  display: flex;
  background: #2e2e2e;
  border-top: 1px solid #6a6a6a;
  border-bottom: 1px solid #000;
`;
const PlayBody = styled.div`
  flex: 1;
  display: flex;
  align-items: flex-start;
  padding-left: 3px;
  border-left: 1px solid #666;
`;
const Buttons = styled.div<{ $mt: number; $ml?: number }>`
  display: flex;
  flex: none;
  margin: ${(p) => p.$mt}px 0 0 ${(p) => p.$ml ?? 0}px;
  border: 1px solid #0e0e0e;
`;
const PButton = styled.div<{ $on?: boolean; $w: number; $h: number }>`
  width: ${(p) => p.$w}px;
  height: ${(p) => p.$h}px;
  display: flex;
  align-items: center;
  justify-content: center;
  border-right: 1px solid #151515;
  border-left: 1px solid ${(p) => (p.$on ? "#8a611b" : "#585858")};
  background: ${(p) => (p.$on ? "#bc871f" : "linear-gradient(#545454, #3c3c3c)")};
  &:last-child { border-right: 0; }
`;
const FrameField = styled.div<{ $w: number; $h: number; $bare?: boolean }>`
  width: ${(p) => p.$w}px;
  height: ${(p) => p.$h}px;
  display: flex;
  align-items: center;
  padding-left: 3px;
  border: 1px solid ${(p) => (p.$bare ? "transparent" : "#262626")};
  background: ${(p) => (p.$bare ? "transparent" : "#131313")};
  font: 12.500px/13px ${MONO};
  letter-spacing: 0.750px;
  color: #dadada;
`;
const FrameStack = styled.div<{ $ml: number; $mt?: number }>`
  display: flex;
  flex: none;
  flex-direction: column;
  margin: ${(p) => p.$mt ?? 6}px 0 0 ${(p) => p.$ml}px;
`;
const Timeline = styled.div`
  width: 1393px;
  flex: none;
  height: 45px;
  margin-left: 1px;
  display: flex;
  flex-direction: column;
`;
const Ruler = styled.svg`
  width: 1393px;
  height: 36px;
  display: block;
  overflow: hidden;
`;
const ScrollTrack = styled.div`
  height: 8px;
  display: flex;
  gap: 1px;
`;
const ScrollPart = styled.div<{ $w?: number }>`
  ${(p) => (p.$w ? `width: ${p.$w}px;` : "flex: 1;")}
  display: flex;
  align-items: center;
  justify-content: center;
  background: linear-gradient(#555, #3a3a3a);
  &::after {
    content: "";
    width: 9px;
    height: 3px;
    background: radial-gradient(circle, #000 1px, transparent 1.300px) 0 0 / 3px 3px;
  }
`;

const transport: Record<string, React.ReactNode> = {
  first: <path d="M1 4h3v12H1zM12 4v12l-7-6zM20 4v12l-7-6z" />,
  prevKey: (<g><path d="M3 3h3v14H3z" fill="#79c33a" /><path d="M16 4v12l-8-6z" /></g>),
  prev: <path d="M10 4v12l-8-6zM12 4h3v12h-3z" />,
  rev: <path d="M15 3v14L3 10z" />,
  stop: <path d="M3 3h14v14H3z" fill="#e9e9e5" stroke="#86703f" />,
  play: <path d="M5 3v14l12-7z" />,
  next: <path d="M4 4h3v12H4zM9 4v12l8-6z" />,
  nextKey: (<g><path d="M4 4v12l8-6z" /><path d="M13 3h3v14h-3z" fill="#79c33a" /></g>),
  last: <path d="M0 4v12l7-6zM8 4v12l7-6zM16 4h3v12h-3z" />,
};

const PlayControls = () => (
  <PlayBar>
    <Grip $low><Tri $c="#000" $h={6} /></Grip>
    <PlayBody>
      <Buttons $mt={8}>
        {Object.keys(transport).map((k) => (
          <PButton key={k} $w={27} $h={26} $on={k === "stop"}>
            <Glyph $s={18} viewBox="0 0 20 20" fill="#dcdcd8">{transport[k]}</Glyph>
          </PButton>
        ))}
      </Buttons>
      <FrameStack $ml={2} $mt={8}><FrameField $w={50} $h={30}>1</FrameField></FrameStack>
      <FrameStack $ml={2}><FrameField $w={42} $h={17}>1</FrameField><FrameField $w={42} $h={16} $bare>1</FrameField></FrameStack>
      <Timeline>
        <Ruler viewBox="356 945 1393 36">
          <path d="M357 963.500H1749" stroke="#a6a6a0" strokeWidth="1.300" />
          <path d="M356.500 965V981" stroke="#0a0a0a" strokeWidth="2" />
          {Array.from({ length: 40 }, (_, i) => {
            const x = 384.700 + i * 34.840;
            const major = i % 4 === 3;
            return (<path key={i} d={`M${x} ${major ? 959 : 960}v${major ? 9 : 7}`} stroke={major ? "#c8c8c8" : "#8c8c8c"} />);
          })}
          {["24", "48", "72", "96", "120", "144", "168", "192", "216", "2"].map((n, i) => (
            <text key={n} x={489.500 + i * 139.350} y="957.500" fontFamily={SANS} fontSize="10" fill="#b4b4b4">{n}</text>
          ))}
          <rect x="357" y="947.500" width="19.500" height="17" fill="#050505" stroke="#f4f4f4" strokeWidth="1.300" />
          <text x="363" y="960" fontFamily={MONO} fontSize="12.500" fill="#fff">1</text>
        </Ruler>
        <ScrollTrack><ScrollPart $w={19} /><ScrollPart /><ScrollPart $w={18} /></ScrollTrack>
      </Timeline>
      <FrameStack $ml={2}><FrameField $w={42} $h={17}>240</FrameField><FrameField $w={42} $h={16} $bare>240</FrameField></FrameStack>
      <Buttons $mt={7} $ml={2}><PButton $w={26} $h={27}><Icon n="key" s={18} /></PButton></Buttons>
      <Buttons $mt={9} $ml={4}>
        {["clock", "loop", "speaker", "window"].map((n, i) => (<PButton key={n} $w={22} $h={22} $on={i === 0}><Icon n={n} s={16} /></PButton>))}
      </Buttons>
    </PlayBody>
  </PlayBar>
);

const Status = styled.div`
  height: 25px;
  flex: none;
  display: flex;
  justify-content: flex-end;
  background: #191919;
`;
const StatusEnd = styled.div`
  width: 171px;
  height: 24px;
  display: flex;
  align-items: center;
  gap: 12px;
  padding-left: 4px;
  background: #3a3a3a;
`;
const UpdateButton = styled.div`
  flex: 1;
  align-self: stretch;
  margin-left: -5px;
  display: flex;
  align-items: center;
  justify-content: center;
  background: linear-gradient(#525252, #424242);
  border-left: 1px solid #5c5c5c;
`;
const UpdateText = styled.span`
  flex: 1;
  text-align: center;
  font-size: 11.300px;
  letter-spacing: -0.300px;
`;

/* ---------- page ---------- */

const mainMenu: Pair[] = [["File", 29], ["Edit", 31], ["Render", 48], ["Assets", 44], ["Windows", 59], ["Help", 52]];
const netMenu: Pair[] = [["Add", 36], ["Edit", 36], ["Go", 29], ["View", 40], ["Tools", 44], ["Layout", 52], ["Help", 40]];

const SUB = { $c: "#6b6b6b", $s: 20.700, $ls: 0.050 };
const DESC = { $c: "#72a3e2", $s: 20.700, $ls: 0.050 };

export default function App() {
  return (
    <Frame>
      <Global />
      <MenuBar>
        <Grip><Tri $up $c="#000" $h={6} /></Grip>
        <MenuBody>
          {mainMenu.map(([t, w]) => (<MenuItem key={t} $w={w}>{t}</MenuItem>))}
          <Combo><Spacer $w={4} /><Icon n="desktop" s={16} /><ComboText $p={3}>Build</ComboText><Steps /></Combo>
          <Combo $ml={4}><Spacer $w={5} /><Icon n="target" s={14} /><ComboText $p={3}>Main</ComboText><Steps /></Combo>
          <Spacer />
          <Combo><Spacer $w={3} /><Icon n="clap" s={17} /><ComboText $p={2}>Main</ComboText><Steps /></Combo>
          <Spacer $w={9} />
          <Icon n="help" s={16} />
        </MenuBody>
      </MenuBar>
      <Shelves>
        <Grip><Tri $up $c="#000" $h={6} /></Grip>
        <ShelfSet w={878} tabs={leftTabs} tools={leftTools} ml={-1.500} gap={29} pad={10} />
        <Splitter><Dots /></Splitter>
        <ShelfSet tabs={rightTabs} tools={rightTools} ml={0} gap={9} pad={9} />
      </Shelves>
      <PaneTabs>
        <PaneTab $w={77} $p={6} $on>/obj/geo1<Close>×</Close></PaneTab>
        <PaneTab $w={77} $p={6}>Tree View<Close>×</Close></PaneTab>
        <PaneTab $w={101} $p={6}>Material Palette<Close>×</Close></PaneTab>
        <PaneTab $w={94} $p={6}>Asset Browser<Close>×</Close></PaneTab>
        <TabEnd $gap={0} $pad={9}><Plus /><Spacer /><PaneMax /><Tri $c="#d8d8d8" $w={4} /><Spacer $w={4} /></TabEnd>
      </PaneTabs>
      <PathBar>
        <Icon n="back" s={16} />
        <Icon n="forward" s={14} />
        <PathBox>
          <Icon n="obj" s={17} /><Crumb $l={8}>obj</Crumb>
          <svg width="9" height="22" viewBox="0 0 9 23"><path d="m1 0 6 11.500L1 23" fill="none" stroke="#111" strokeWidth="1.500" /><path d="m2.500 0 6 11.500L2.500 23" fill="none" stroke="#666" /></svg>
          <Spacer $w={2} /><Icon n="geo" s={17} /><Crumb $l={4}>geo1</Crumb>
          <Spacer />
          <DropEnd><Tri $c="#999" $w={3.500} /></DropEnd>
        </PathBox>
        <Icon n="pin" s={18} /><Icon n="radar" s={17} />
      </PathBar>
      <NetMenu>
        <Grip><Tri $up $c="#000" $h={6} /></Grip>
        <NetBody>
          {netMenu.map(([t, w]) => (<MenuItem key={t} $w={w}>{t}</MenuItem>))}
          <Spacer />
          <Icon n="wrench" /><Spacer $w={8} /><Icon n="tree" /><Spacer $w={8} /><Icon n="list" />
          <Spacer $w={24} /><Icon n="palette" /><Spacer $w={9} /><Icon n="nodes" />
          <Spacer $w={25} /><Icon n="netbox" /><Spacer $w={8} /><Icon n="note" /><Spacer $w={8} /><Icon n="image" /><Spacer $w={8} /><Icon n="crate" />
          <Spacer $w={25} /><Icon n="search" /><Spacer $w={8} /><Icon n="eye" />
        </NetBody>
      </NetMenu>
      <Workspace>
        <NetworkGraph />
        <Label $x={594.500} $y={196} $c="#454545" $s={19.500} $ls={-0.200}>Non-Commercial Edition</Label>
        <Label $x={1286} $y={201} $c="#4d4d4d" $s={23} $ls={0.050} $b>Geometry</Label>
        <Label $x={788} $y={236}>vdbfromparticles1</Label>
        <Label $x={788} $y={385}>transform1</Label>
        <Label $x={952} $y={302} {...SUB}>Block Begin</Label>
        <Label $x={952} $y={329}>repeat_begin1</Label>
        <Label $x={952} $y={382} {...DESC}>Feedback : 2</Label>
        <Label $x={1216} $y={302} {...SUB}>Block Begin</Label>
        <Label $x={1216} $y={329}>repeat_begin1_metadata</Label>
        <Label $x={1216} $y={367} {...DESC}>Metadata : 2</Label>
        <Label $x={681} $y={528}>mirror3</Label>
        <Label $x={927} $y={528}>vdbcombine1</Label>
        <Label $x={851} $y={671}>vdbcombine2</Label>
        <Label $x={952} $y={776} {...SUB}>Block End</Label>
        <Label $x={952} $y={803}>repeat_end1</Label>
        <Label $x={952} $y={856} {...DESC}>Feedback</Label>
        <Label $x={935} $y={898} {...SUB}>Null</Label>
        <Label $x={935} $y={925}>OUT</Label>
        <ParamPanel />
      </Workspace>
      <PlayControls />
      <Status>
        <StatusEnd>
          <Icon n="brain" s={17} /><Icon n="refresh" s={16} />
          <UpdateButton><UpdateText>Auto Update</UpdateText><Steps /></UpdateButton>
        </StatusEnd>
      </Status>
    </Frame>
  );
}
